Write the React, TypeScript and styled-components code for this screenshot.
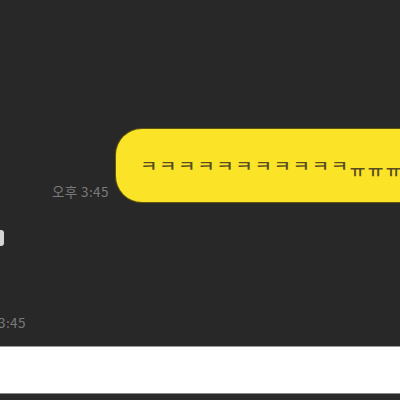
import React from "react";
import styled, { createGlobalStyle } from "styled-components";

const Global = createGlobalStyle`
  html, body { margin: 0; padding: 0; background: #272727; }
  body { font-family: "Noto Sans CJK KR", "Noto Sans", sans-serif; }
`;

const Page = styled.div`
  width: 400px;
  height: 400px;
  display: flex;
  flex-direction: column;
  overflow: hidden;
  background: #272727;
`;

const ChatArea = styled.div`
  height: 346px;
  flex-shrink: 0;
  overflow: hidden;
  display: flex;
  flex-direction: column;
  background: #282828;
`;

const OutRow = styled.div`
  margin-top: 129px;
  padding-left: 52px;
  display: flex;
  align-items: flex-end;
  gap: 7px;
`;

const Time = styled.span<{ $shift?: number }>`
  font-family: "Noto Sans CJK KR", "Noto Sans", sans-serif;
  font-size: 13.5px;
  letter-spacing: 0.4px;
  line-height: 15px;
  color: #7a7a7a;
  white-space: nowrap;
  flex-shrink: 0;
  margin-left: ${(p) => p.$shift ?? 0}px;
  padding-bottom: ${(p) => (p.$shift ? 0 : 3)}px;
`;

const Bubble = styled.div`
  flex-shrink: 0;
  height: 73px;
  padding: 0 24px 0 24px;
  border-radius: 26px;
  background: #fbe427;
  box-shadow: 0 0 0 1px #5e5416, 0 0 2px 1px #3a3516;
  display: flex;
  align-items: center;
  white-space: nowrap;
  font-family: "Noto Sans CJK KR", "Noto Sans", sans-serif;
  color: #574c22;
`;

const Laugh = styled.span`
  display: inline-block;
  font-size: 19px;
  font-weight: 500;
  letter-spacing: 1.6px;
  transform: scaleY(0.7);
  transform-origin: center;
`;

const Cry = styled.span`
  display: inline-block;
  font-size: 17px;
  font-weight: 500;
  letter-spacing: 2.3px;
  transform: translateY(4px);
`;

const InRow = styled.div<{ $top: number }>`
  margin-top: ${(p) => p.$top}px;
  display: flex;
  align-items: flex-end;
`;

const InBubble = styled.div`
  width: 4px;
  height: 16px;
  background: #d4d4d4;
  border-radius: 0 3px 3px 0;
`;

const WhiteBar = styled.div`
  height: 46px;
  flex-shrink: 0;
  background: #ffffff;
  border-top: 1px solid #9a9a9a;
`;

const BottomStrip = styled.div`
  flex: 1;
  background: #2a2a2a;
  border-top: 1px solid #8a8a8a;
`;

export default function App() {
  return (
    <>
      <Global />
      <Page>
        <ChatArea>
          <OutRow>
            <Time>오후 3:45</Time>
            <Bubble>
              <Laugh>ㅋㅋㅋㅋㅋㅋㅋㅋㅋㅋㅋ</Laugh>
              <Cry>ㅠㅠㅠㅠㅠㅠ</Cry>
            </Bubble>
          </OutRow>
          <InRow $top={28}>
            <InBubble />
          </InRow>
          <InRow $top={69}>
            <Time $shift={-31}>오후 3:45</Time>
          </InRow>
        </ChatArea>
        <WhiteBar />
        <BottomStrip />
      </Page>
    </>
  );
}
